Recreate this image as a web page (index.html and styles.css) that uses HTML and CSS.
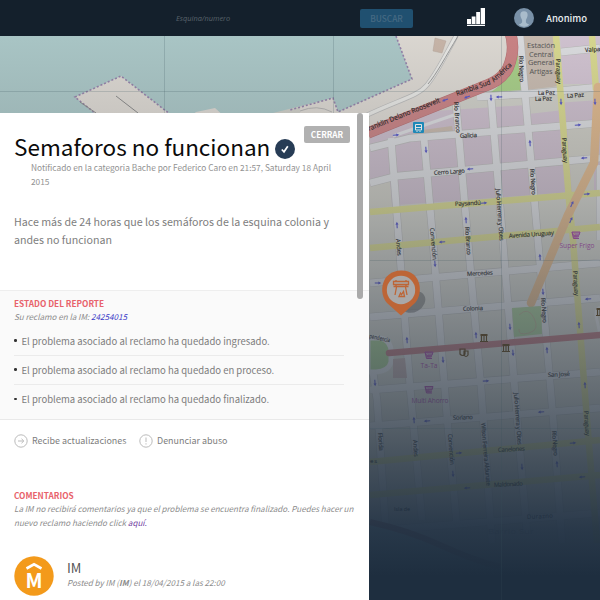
FILE: index.html
```html
<!DOCTYPE html>
<html lang="es">
<head>
<meta charset="utf-8">
<title>Semaforos no funcionan</title>
<link rel="stylesheet" href="styles.css">
</head>
<body>
<svg class="map" viewBox="0 0 600 600" width="600" height="600">
  <defs>
    <linearGradient id="shade" x1="0" y1="0" x2="0" y2="1">
      <stop offset="0" stop-color="#555" stop-opacity="0"/>
      <stop offset=".06" stop-color="#555" stop-opacity=".03"/>
      <stop offset=".33" stop-color="#4b5055" stop-opacity=".27"/>
      <stop offset=".5" stop-color="#3f4853" stop-opacity=".5"/>
      <stop offset=".66" stop-color="#333f4c" stop-opacity=".7"/>
      <stop offset=".77" stop-color="#2a3847" stop-opacity=".84"/>
      <stop offset=".88" stop-color="#213143" stop-opacity=".95"/>
      <stop offset=".96" stop-color="#1e2e3f" stop-opacity="1"/>
    </linearGradient>
    <g id="cart"><path d="M-4-3.500H4L3-.2H-2.500ZM-4-3.500L-2.500 3H3M-2.500 1.200H3" fill="#a545a5" fill-opacity=".5" stroke="#a545a5" stroke-width="1"/></g>
    <g id="museum"><path d="M-3.500-2.500h7M-2.500-2v5M0-2v5M2.500-2v5M-4 3.500h8M-3.500-3.500h7" fill="none" stroke="#5a3d10" stroke-width="1.100"/></g>
    <g id="arrow"><path d="M-3.200 0h5" fill="none" stroke="#5656c8" stroke-width="1.100"/><path d="M.3-1.500l3 1.500-3 1.500Z" fill="#5656c8"/></g>
  </defs>
  <rect width="600" height="600" fill="#d0d0c9"/>
  <path d="M370 137L420 112 600 100V190L370 207Z" fill="#cdbfcd"/>
  <path d="M522 36H556L560 86 526 90Z" fill="#c8bbb0"/>
  <path d="M560 36H600V84H563Z" fill="#d2c4d2"/>
  <path d="M528 100L564 96V110L528 114Z" fill="#d0cfc8"/>
  <path d="M567 126L594 124V193H572Z" fill="#cecdc5"/>
  <path d="M370 186L390 181 392 206 370 209Z" fill="#cecdc5"/>
  <path d="M396 36H510L513 55 500 76 370 127V113H300V107L333 98 338 112 412 79Z" fill="#dedad4"/>
  <path d="M0 36H396L412 79 338 112 333 98 253 118H0Z" fill="#abc8c8"/>
  <path d="M75 97L121 76 175 118H100Z" fill="#dedad4"/>
  <path d="M188 118L196 112 215 108 226 118ZM290 118L333 98 338 112 350 118Z" fill="#dedad4"/>
  <g fill="none" stroke="#9481aa" stroke-width="1.600" stroke-dasharray="2 2">
    <path d="M100 117L75 97 121 76 175 118M396 36L412 79 338 112 333 98 290 110"/>
  </g>
  <path d="M116 96L138 113M80 102L96 113" stroke="#888" stroke-width="1" fill="none"/>
  <path d="M300 111Q317 104 332 112" stroke="#aaa" stroke-width=".8" fill="none"/>
  <path d="M435 38L446 41 442 53 433 51Z" fill="#c9b6a9" stroke="#b7a79d" stroke-width=".5"/>
  <path d="M363 117C400 99 417 97 427 85S442 62 456 36" fill="none" stroke="#bbb" stroke-width="5"/>
  <path d="M363 117C400 99 417 97 427 85S442 62 456 36" fill="none" stroke="#e9e9e6" stroke-width="3.500"/>
  <path d="M458 36C446 56 436 75 428 84" fill="none" stroke="#999" stroke-width="1"/>
  <path d="M491 92C505 84 514 65 517 42L524 90Z" fill="#a8cf88"/>
  <path d="M415 131L452 126 453 131 415 135Z" fill="#c8b9ad"/>

  <g fill="none" stroke="#b9b9b8" stroke-width="8">
    <path d="M391 138L398 230 410 387 422 520M424 138L432 230 447 417 457 527M456 103L467 230 481 387 492 543M491 97L502 230 517 417 527 533M520 36L537 230 553 417 562 543M372 365L377 400 386 533"/>
    <path d="M561 52L600 48M477 97L527 94 600 87M370 148L410 138 600 123M370 183L397 176 600 158M370 283L600 263M370 317L600 298M370 390L600 372M370 426L600 408M370 531L600 513M600 165V240"/>
  </g>
  <g fill="none" stroke="#dcdde0" stroke-width="6.800">
    <path d="M391 138L398 230 410 387 422 520M424 138L432 230 447 417 457 527M456 103L467 230 481 387 492 543M491 97L502 230 517 417 527 533M520 36L537 230 553 417 562 543M372 365L377 400 386 533"/>
    <path d="M561 52L600 48M477 97L527 94 600 87M370 148L410 138 600 123M370 183L397 176 600 158M370 283L600 263M370 317L600 298M370 390L600 372M370 426L600 408M370 531L600 513M600 165V240"/>
    <path d="M393 136L454 115" stroke-width="3"/>
  </g>
  <g fill="none" stroke="#d9d990" stroke-width="6.500">
    <path d="M556 36L569 200 573 240 587 420 597 543M592 36L596 90M370 212L573 195 600 193M370 248L600 227M370 462L600 440M370 495L600 475"/>
  </g>
  <path d="M598 87L594 163 568 215 531 303" fill="none" stroke="#dfb88d" stroke-width="8.500" stroke-linecap="round" stroke-linejoin="round"/>
  <path d="M512 308L541 306 542 334 514 337Z" fill="#a5c795"/>
  <path d="M519 315Q528 306 534 318T529 333 519 329" fill="none" stroke="#b99a8a" stroke-width=".6"/>
  <path d="M368 338H380Q391 340 391 352V362Q389 371 376 372H368Z" fill="#a5cc90" stroke="#dcdde0" stroke-width="5"/>
  <path d="M393 359L405 358 407 378 393 378Z" fill="#c2adad"/>
  <path d="M597 320Q594 310 600 307M597 320L600 335" fill="none" stroke="#dedede" stroke-width="3"/>
  <path d="M389 353L600 335" stroke="#bb777d" stroke-width="6.500" stroke-linecap="round"/>
  <path d="M510 32Q516 49 508 68C501 81 490 84 480 88L368 133" fill="none" stroke="#b66f72" stroke-width="11.500"/>
  <path d="M510 32Q516 49 508 68C501 81 490 84 480 88L368 133" fill="none" stroke="#cb8385" stroke-width="10.500"/>
  <path d="M370 524Q410 533 440 545T500 568 600 570V600H370Z" fill="#a9c6c6"/>
  <path d="M370 522Q410 531 440 545T500 567" fill="none" stroke="#a07070" stroke-width="6"/>

  <g class="street">
    <text class="big" transform="translate(369 131) rotate(-22)" textLength="77" lengthAdjust="spacingAndGlyphs">ranklin Delano Roosevelt</text>
    <text class="big" transform="translate(457 96) rotate(-19)" textLength="36" lengthAdjust="spacingAndGlyphs">Rambla Sud</text>
    <text class="big" transform="translate(494 82.500) rotate(-43)" textLength="25" lengthAdjust="spacingAndGlyphs">América</text>
    <text transform="translate(519 56) rotate(88)" textLength="26">Río Negro</text>
    <text transform="translate(556 59) rotate(88)" textLength="25">Paraguay</text>
    <text x="538" y="95" textLength="17" transform="rotate(-2 538 95)">La Paz</text>
    <text x="535" y="101" textLength="17" transform="rotate(-2 535 101)">La Paz</text>
    <text x="567" y="98" textLength="17" transform="rotate(-4 567 98)">La Paz</text>
    <text x="585" y="52" transform="rotate(-3 585 52)">Valpa</text>
    <text transform="translate(454 102) rotate(86)" textLength="31">Río Branco</text>
    <text x="460" y="138" textLength="17" transform="rotate(-3 460 138)">Galicia</text>
    <text x="434" y="175" textLength="31" transform="rotate(-4 434 175)">Cerro Largo</text>
    <text x="455" y="206" textLength="26" transform="rotate(-3 455 206)">Paysandú</text>
    <text transform="translate(562 138) rotate(86)" textLength="25">Paraguay</text>
    <text transform="translate(530 169) rotate(86)" textLength="26">Río Negro</text>
    <text transform="translate(496 189) rotate(86)" textLength="52">Julio Herrera y Obes</text>
    <text transform="translate(396 239) rotate(85)" textLength="17">Andes</text>
    <text transform="translate(430 228) rotate(85)" textLength="32">Convención</text>
    <text transform="translate(465 227) rotate(86)" textLength="28">Río Branco</text>
    <text x="509" y="238" textLength="45" transform="rotate(-4 509 238)">Avenida Uruguay</text>
    <text x="467" y="276" textLength="26" transform="rotate(-3 467 276)">Mercedes</text>
    <text x="463" y="311" textLength="20" transform="rotate(-3 463 311)">Colonia</text>
    <text transform="translate(573 271) rotate(86)" textLength="25">Paraguay</text>
    <text transform="translate(541 298) rotate(86)" textLength="25">Río Negro</text>
    <text transform="translate(369 338) rotate(12)" textLength="21" lengthAdjust="spacingAndGlyphs">pendencia</text>
    <text x="548" y="377" textLength="22" transform="rotate(-3 548 377)">San José</text>
    <text x="453" y="420" textLength="20" transform="rotate(-3 453 420)">Soriano</text>
    <text transform="translate(514 393) rotate(86)" textLength="52">Julio Herrera y Obes</text>
    <text transform="translate(584 411) rotate(86)" textLength="25">Paraguay</text>
    <text transform="translate(552 431) rotate(86)" textLength="25">Río Negro</text>
    <text transform="translate(378 433) rotate(86)" textLength="18">Florida</text>
    <text transform="translate(413 440) rotate(86)" textLength="17">Andes</text>
    <text transform="translate(448 434) rotate(86)" textLength="31">Convención</text>
    <text transform="translate(481 423) rotate(85)" textLength="63">Wilson Ferreira Aldunate</text>
    <text x="498" y="452" textLength="27" transform="rotate(-3 498 452)">Canelones</text>
    <text x="494" y="487" textLength="29" transform="rotate(-3 494 487)">Maldonado</text>
    <text x="370" y="463" textLength="7">es</text>
    <text x="527" y="519" textLength="26" transform="rotate(-3 527 519)">Durazno</text>
    <text x="394" y="511" textLength="16" lengthAdjust="spacingAndGlyphs">Isla de</text>
  </g>
  <g class="place">
    <text x="541" y="48" textLength="28">Estación</text>
    <text x="541" y="56.500" textLength="24">Central</text>
    <text x="541" y="65" textLength="26">General</text>
    <text x="541" y="73.500" textLength="23">Artigas</text>
    <text x="511" y="534" textLength="46" lengthAdjust="spacingAndGlyphs" opacity=".5">Barrio Sur</text>
  </g>
  <g class="shop">
    <text x="577" y="248" textLength="35">Super Frigo</text>
    <text x="429" y="368" textLength="17">Ta-Ta</text>
    <text x="430" y="403" textLength="37">Multi Ahorro</text>
  </g>
  <use href="#cart" x="576" y="235.500"/><use href="#cart" x="429" y="355.500"/><use href="#cart" x="429" y="390"/>
  <use href="#museum" x="484" y="338"/><use href="#museum" x="506" y="348"/><use href="#museum" x="600" y="312"/>
  <path d="M460 349h5v5q-2.500 3-5 0ZM464 351h4v4q-2 3-4 0Z" fill="none" stroke="#5a3d10" stroke-width="1.200"/>
  <rect x="413" y="122" width="11" height="11" rx="1" fill="#1493cb"/>
  <path d="M415.500 124.500h6v5.500h-6zM415.500 127.500h6M417 131v1M420 131v1" stroke="#fff" fill="none"/>
  <g>
    <use href="#arrow" transform="translate(445 100) rotate(160)"/><use href="#arrow" transform="translate(467 97) rotate(160)"/>
    <use href="#arrow" transform="translate(491 98) rotate(88)"/><use href="#arrow" transform="translate(499 97) rotate(178)"/>
    <use href="#arrow" transform="translate(561 102) rotate(88)"/><use href="#arrow" transform="translate(595 102) rotate(88)"/>
    <use href="#arrow" transform="translate(396 135) rotate(-5)"/><use href="#arrow" transform="translate(426 150) rotate(86)"/>
    <use href="#arrow" transform="translate(530 143) rotate(266)"/><use href="#arrow" transform="translate(578 125) rotate(-4)"/>
    <use href="#arrow" transform="translate(470 169) rotate(176)"/><use href="#arrow" transform="translate(584 158) rotate(176)"/>
    <use href="#arrow" transform="translate(484 203) rotate(-4)"/><use href="#arrow" transform="translate(587 194) rotate(-4)"/>
    <use href="#arrow" transform="translate(397 225) rotate(266)"/><use href="#arrow" transform="translate(466 220) rotate(266)"/>
    <use href="#arrow" transform="translate(572 204) rotate(295)"/><use href="#arrow" transform="translate(571 220) rotate(295)"/>
    <use href="#arrow" transform="translate(442 242) rotate(176)"/><use href="#arrow" transform="translate(435 264) rotate(86)"/>
    <use href="#arrow" transform="translate(540 257) rotate(266)"/><use href="#arrow" transform="translate(543 292) rotate(86)"/>
    <use href="#arrow" transform="translate(378 283)"/><use href="#arrow" transform="translate(588 299) rotate(176)"/>
    <use href="#arrow" transform="translate(407 340) rotate(266)"/><use href="#arrow" transform="translate(476 335) rotate(266)"/>
    <use href="#arrow" transform="translate(510 327) rotate(86)"/><use href="#arrow" transform="translate(579 325) rotate(266)"/>
    <use href="#arrow" transform="translate(443 360) rotate(86)"/><use href="#arrow" transform="translate(513 353) rotate(86)"/>
    <use href="#arrow" transform="translate(547 350) rotate(266)"/><use href="#arrow" transform="translate(486 381) rotate(-3)"/>
    <use href="#arrow" transform="translate(375 383) rotate(86)"/><use href="#arrow" transform="translate(585 385) rotate(266)"/>
    <use href="#arrow" transform="translate(414 420) rotate(266)"/><use href="#arrow" transform="translate(427 421) rotate(176)"/>
    <use href="#arrow" transform="translate(541 412) rotate(176)"/><use href="#arrow" transform="translate(459 453) rotate(-4)"/>
    <use href="#arrow" transform="translate(573 443) rotate(-4)"/><use href="#arrow" transform="translate(453 474) rotate(86)"/>
    <use href="#arrow" transform="translate(522 467) rotate(86)"/><use href="#arrow" transform="translate(557 464) rotate(266)"/>
    <use href="#arrow" transform="translate(467 488) rotate(176)"/><use href="#arrow" transform="translate(582 477) rotate(176)"/>
  </g>
  <ellipse cx="413" cy="302" rx="13" ry="10" fill="#555" opacity=".5" transform="rotate(-30 413 302)"/>
  <rect width="600" height="600" fill="url(#shade)"/>
  <path d="M401 315.500L387 303C378 293 381 271 401 270.500S424 293 415 303Z" fill="#bd6536"/>
  <circle cx="401" cy="290" r="14.200" fill="#a9a8a8"/>
  <path d="M393.500 281.500h15v3h-15zM393.500 286.500h15M396 281v-1M406 281v-1M396 284v2M406 284v2M396.500 287l-1.500 8M405.500 287l1.500 8M399 296.500l1.500-3.500 1 1.500 2-3 1 5Z" fill="none" stroke="#bd6536" stroke-width="1.300"/>
  <path d="M164.500 36V113M333.500 36V113M501.500 36V600M0 91.500H600M370 260.500H600M370 428.500H600" stroke="#39505a" stroke-opacity=".2" fill="none"/>
</svg>

<header class="topbar">
  <span class="search">Esquina/numero</span>
  <span class="search-btn">BUSCAR</span>
  <svg class="bars" width="18" height="18" viewBox="0 0 18 18"><path d="M0 11h4v5H0zM4.700 8.500h3.800V16H4.700zM9.200 4h3.800v12H9.200zM13.700 0h4.300v16h-4.300zM0 16.700h18v1.200H0z" fill="#fff"/></svg>
  <svg class="avatar" width="20" height="20" viewBox="0 0 20 20"><circle cx="10" cy="10" r="10" fill="#7991a8"/><path d="M10 3.200c3.200 0 4 2.300 3.500 4.900-.3 1.900-1.200 3-1.600 3.900v2.200c.3 1.300 2.600 1.500 3.300 2.600q-5 4-10.400 0c.7-1.100 3-1.300 3.300-2.600V12c-.4-.9-1.300-2-1.600-3.900C6 5.500 6.800 3.200 10 3.200Z" fill="#a9bccb"/></svg>
  <span class="user">Anonimo</span>
</header>

<main class="panel">
  <div class="scrollbar"></div>
  <button class="close">CERRAR</button>
  <section class="report">
    <h1><span>Semaforos no funcionan</span><svg width="20" height="20" viewBox="0 0 20 20"><circle cx="10" cy="10" r="10" fill="#273c55"/><path d="M6.800 10.500l2.200 2.300L12.800 7.200" fill="none" stroke="#fff" stroke-width="1.700"/></svg></h1>
    <p class="meta">Notificado en la categoria Bache por Federico Caro en 21:57, Saturday 18 April<br>2015</p>
    <p class="desc">Hace más de 24 horas que los semáforos de la esquina colonia y<br>andes no funcionan</p>
  </section>
  <section class="status">
    <h2>ESTADO DEL REPORTE</h2>
    <p class="note ref">Su reclamo en la IM: <a class="blue">24254015</a></p>
    <ul>
      <li>El problema asociado al reclamo ha quedado ingresado.</li>
      <li>El problema asociado al reclamo ha quedado en proceso.</li>
      <li>El problema asociado al reclamo ha quedado finalizado.</li>
    </ul>
  </section>
  <div class="actions">
    <svg width="14" height="14" viewBox="0 0 14 14" fill="none" stroke="#bbb"><circle cx="7" cy="7" r="6.200"/><path d="M4 7h5.500M7.500 4.800L9.800 7 7.500 9.200"/></svg>
    <span class="follow">Recibe actualizaciones</span>
    <svg width="14" height="14" viewBox="0 0 14 14" fill="none" stroke="#bbb"><circle cx="7" cy="7" r="6.200"/><path d="M7 3.500v4.500M7 9.300v1.200"/></svg>
    <span class="abuse">Denunciar abuso</span>
  </div>
  <section class="comments">
    <h2>COMENTARIOS</h2>
    <p class="note">La IM no recibirá comentarios ya que el problema se encuentra finalizado. Puedes hacer un<br>nuevo reclamo haciendo click <a class="violet">aquí.</a></p>
    <article>
      <svg width="40" height="40" viewBox="0 0 40 40"><circle cx="20" cy="20" r="19.700" fill="#f39a1b"/><path d="M12.500 12.500L20 8.300l7.500 4.200" fill="none" stroke="#fff" stroke-width="2.600"/><text class="crest" x="20" y="31.500">M</text></svg>
      <div>
        <h3>IM</h3>
        <p class="posted">Posted by IM (<b>IM</b>) el 18/04/2015 a las 22:00</p>
      </div>
    </article>
  </section>
</main>
</body>
</html>
```
FILE: styles.css
```css
* { box-sizing: border-box; margin: 0; padding: 0; }
body {
  width: 600px; height: 600px; overflow: hidden; position: relative;
  font-family: "Noto Sans CJK SC", sans-serif; color: #7d7d7d; background: #1e2e3f;
}
.map { position: absolute; left: 0; top: 0; }
.map text { font-family: "Open Sans", "Noto Sans", sans-serif; }
.street text { font-size: 6px; fill: #1c1c1c; stroke: #1c1c1c; stroke-width: .12px; }
.street .big { font-size: 7px; }
.place text { font-size: 7.4px; fill: #555; text-anchor: middle; }
.shop text { font-size: 6.6px; fill: #a545a5; text-anchor: middle; }

.topbar { position: relative; display: flex; align-items: center; height: 36px; background: #14202c; white-space: nowrap; }
.search { width: 184px; margin-left: 176px; font: italic 7.4px "Open Sans", sans-serif; color: #59636b; }
.search-btn {
  width: 53px; height: 19px; line-height: 19px; border-radius: 2px; text-align: center;
  background: #205070; color: #466a83; font-size: 8.3px; font-weight: 500;
}
.bars { margin: -2px 0 0 54px; }
.avatar { margin-left: 29px; }
.user { margin: -1px 0 0 12px; color: #e8ecef; font-size: 9.5px; font-weight: 500; line-height: 20px; }

.panel { position: relative; width: 369px; height: 487px; margin-top: 77px; background: #fff; }
.panel p, .panel h1, .panel h2, .panel h3, .panel li, .panel span { white-space: nowrap; }
.scrollbar { position: absolute; left: 357px; top: 0; width: 6px; height: 186px; border-radius: 3px; background: #aaa; }
.close {
  position: absolute; left: 304px; top: 13px; width: 46px; height: 17px; border: 0; border-radius: 2px;
  background: #b1b1b1; color: #fff; font: bold 8.2px/17px "Noto Sans CJK SC", sans-serif;
}
.report { height: 178px; padding: 17px 14px 0; border-bottom: 1px solid #eee; }
h1 { display: flex; align-items: center; gap: 5px; height: 32px; color: #0b0b0b; font-size: 22.5px; font-weight: 400; line-height: 32px; }
h1 svg { margin-top: 6px; }
.meta { margin: -1px 0 0 17px; font-size: 8.34px; line-height: 13.5px; color: #929292; }
.desc { margin-top: 25px; font-size: 10.67px; line-height: 18px; }
.status { height: 129px; padding: 6px 14px 0; background: #fafafa; border-bottom: 1px solid #e9e9e9; }
h2 { font-size: 8.25px; line-height: 13px; font-weight: 700; color: #e8626b; }
.note, .posted { font-size: 8.08px; line-height: 13.5px; font-style: italic; color: #8c8c8c; }
.blue { color: #3c3cc8; }
.violet { color: #703ba0; }
ul { list-style: none; margin-top: 3px; width: 330px; }
li { display: flex; align-items: center; gap: 5px; height: 29px; font-size: 9.5px; line-height: 28px; border-bottom: 1px solid #ebebeb; }
li:last-child { border: 0; }
li::before { content: ""; width: 2.5px; height: 2.5px; border-radius: 50%; background: #333; }
.actions { display: flex; align-items: center; height: 42px; padding: 0 14px; font-size: 8.95px; line-height: 14px; }
.follow { width: 107px; margin-left: 4px; }
.abuse { margin-left: 4px; }
.comments { padding: 27px 14px 0; }
article { display: flex; gap: 13px; margin-top: 27px; }
article > div { padding-top: 3px; }
h3 { font-size: 13px; line-height: 17px; font-weight: 400; color: #555; }
.crest { font: bold 20px "Noto Sans CJK SC", sans-serif; fill: #fff; text-anchor: middle; }
```
